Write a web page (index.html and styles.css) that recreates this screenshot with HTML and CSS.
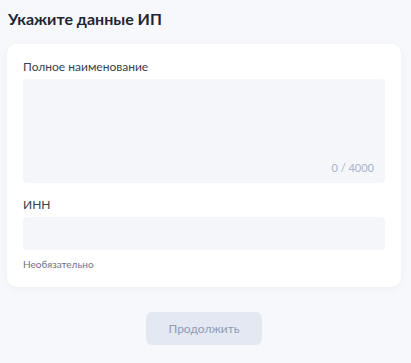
FILE: index.html
```html
<!DOCTYPE html>
<html lang="ru">
<head>
    <meta charset="UTF-8">
    <meta name="viewport" content="width=device-width, initial-scale=1.0">
    <title>Данные ИП</title>
    <link rel="stylesheet" href="styles.css">
</head>
<body>
<div class="page">
    <h2>Укажите данные ИП</h2>
    <form class="card">
        <div class="form-group">
            <label for="fullName">Полное наименование</label>
            <div class="textarea-wrap">
                <textarea id="fullName" maxlength="4000"></textarea>
                <span class="counter">0 / 4000</span>
            </div>
        </div>
        <div class="form-group">
            <label for="inn">ИНН</label>
            <input type="text" id="inn">
            <div class="hint">Необязательно</div>
        </div>
    </form>
    <div class="actions">
        <button type="button" disabled>Продолжить</button>
    </div>
</div>
</body>
</html>
```

FILE: styles.css
```css
* {
    margin: 0;
    padding: 0;
    box-sizing: border-box;
}

body {
    font-family: 'Lato', 'Noto Sans', sans-serif;
    background-color: #f7f8fc;
    color: #1f2633;
}

.page {
    padding: 9px 10px 0 7px;
}

h2 {
    font-size: 16px;
    font-weight: 700;
    line-height: 20px;
    padding-left: 1px;
    margin-bottom: 15px;
}

.card {
    background-color: white;
    border-radius: 10px;
    box-shadow: 0 2px 8px rgba(40, 60, 120, 0.04);
    padding: 15px 16px 17px 16px;
}

.form-group + .form-group {
    margin-top: 14px;
}

label {
    display: block;
    font-size: 12px;
    line-height: 16px;
    color: #3a4150;
    margin-bottom: 4px;
}

.textarea-wrap {
    position: relative;
}

textarea,
input {
    display: block;
    width: 100%;
    border: none;
    border-radius: 4px;
    background-color: #f5f6fa;
    font-family: inherit;
    font-size: 13px;
    color: #1f2633;
    padding: 8px 12px;
    outline: none;
}

textarea {
    height: 104px;
    resize: none;
}

input {
    height: 33px;
}

.counter {
    position: absolute;
    right: 11px;
    bottom: 9px;
    font-size: 11px;
    color: #a8b2cc;
}

.hint {
    font-size: 10px;
    color: #6c7486;
    margin-top: 8px;
}

.actions {
    display: flex;
    justify-content: center;
    margin-top: 25px;
}

button {
    width: 116px;
    height: 33px;
    border: none;
    border-radius: 6px;
    background-color: #e4e8f2;
    color: #8c9ab6;
    font-family: inherit;
    font-size: 12px;
}
```
